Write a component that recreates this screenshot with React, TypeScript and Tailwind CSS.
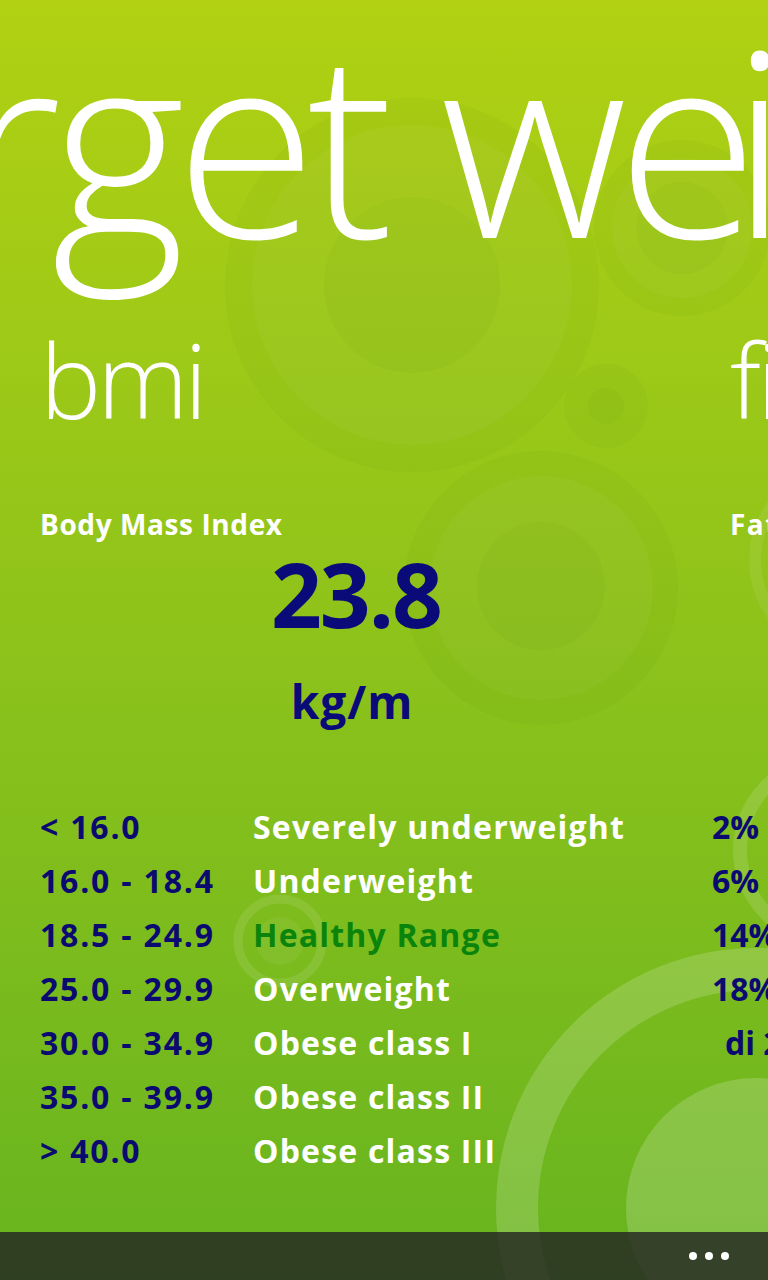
const rows: { range: string; label: string; extra: string; healthy?: boolean; indent?: boolean }[] = [
  { range: "< 16.0", label: "Severely underweight", extra: "2%" },
  { range: "16.0 - 18.4", label: "Underweight", extra: "6%" },
  { range: "18.5 - 24.9", label: "Healthy Range", extra: "14%", healthy: true },
  { range: "25.0 - 29.9", label: "Overweight", extra: "18%" },
  { range: "30.0 - 34.9", label: "Obese class I", extra: "di 2", indent: true },
  { range: "35.0 - 39.9", label: "Obese class II", extra: "" },
  { range: "> 40.0", label: "Obese class III", extra: "" },
];

function Backdrop() {
  return (
    <svg className="absolute inset-0" width="768" height="1280" viewBox="0 0 768 1280">
      {/* darker rings, upper half */}
      <g fill="#2f5a00" fillOpacity="0.04">
        <circle cx="412" cy="285" r="187" />
        <circle cx="412" cy="285" r="88" />
        <circle cx="682" cy="228" r="88" />
        <circle cx="682" cy="228" r="46" />
        <circle cx="606" cy="406" r="42" />
        <circle cx="606" cy="406" r="18" />
        <circle cx="541" cy="588" r="137" />
        <circle cx="541" cy="586" r="64" />
      </g>
      <g fill="#ffffff" fillOpacity="0.035">
        <circle cx="412" cy="285" r="160" />
        <circle cx="541" cy="588" r="112" />
        <circle cx="682" cy="228" r="70" />
      </g>
      {/* lighter rings, lower half */}
      <g fill="none" stroke="#ffffff">
        <circle cx="756" cy="1208" r="239" strokeWidth="42" strokeOpacity="0.17" />
        <circle cx="830" cy="850" r="90" strokeWidth="14" strokeOpacity="0.13" />
        <circle cx="850" cy="560" r="95" strokeWidth="12" strokeOpacity="0.07" />
        <circle cx="280" cy="941" r="42" strokeWidth="9" strokeOpacity="0.1" />
      </g>
      <circle cx="756" cy="1208" r="130" fill="#ffffff" fillOpacity="0.18" />
      <circle cx="280" cy="941" r="24" fill="#ffffff" fillOpacity="0.06" />
    </svg>
  );
}

export default function App() {
  return (
    <div className="relative w-[768px] h-[1280px] overflow-hidden bg-gradient-to-b from-[#b1d112] to-[#67b41f] font-['Open_Sans',sans-serif]">
      <Backdrop />
      <div className="relative flex flex-col h-full">
        <h1 className="mt-[9px] ml-[-242px] whitespace-nowrap text-[258px] leading-none font-light tracking-[-10px] text-white">
          target we<span className="ml-[-18px]">i</span>ght
        </h1>

        <div className="flex mt-[61px]">
          <section className="ml-[40px] w-[690px] shrink-0">
            <h2 className="text-[103px] leading-none font-light text-white tracking-[-4px]">bmi</h2>
            <p className="mt-[79px] text-[28px] leading-none font-bold text-white tracking-[0.6px]">
              Body Mass Index
            </p>
            <div className="w-[624px] text-center text-[#0a0a78]">
              <p className="mt-[11px] text-[89px] leading-none font-bold tracking-[-2px] pl-[8px]">23.8</p>
              <p className="mt-[40px] text-[46px] leading-none font-bold tracking-[1px]">kg/m</p>
            </div>

            <div className="mt-[76px] grid grid-cols-[213px_459px_120px] text-[32px] leading-[54px] font-bold whitespace-nowrap">
              {rows.map((r) => (
                <div key={r.range} className="contents">
                  <span className="text-[#0a0a70] tracking-[1.8px]">{r.range}</span>
                  <span className={`tracking-[1.2px] ${r.healthy ? "text-[#0b840c]" : "text-white"}`}>{r.label}</span>
                  <span className={`text-[#0a0a70] ${r.indent ? "pl-[13px]" : ""}`}>{r.extra}</span>
                </div>
              ))}
            </div>
          </section>

          <section className="shrink-0">
            <h2 className="text-[103px] leading-none font-light text-white tracking-[-4px]">fitness</h2>
            <p className="mt-[79px] text-[28px] leading-none font-bold text-white tracking-[1.5px]">
              Fat percentage
            </p>
          </section>
        </div>

        <div className="mt-auto h-[48px] bg-[#222222]/80 flex items-center justify-end gap-[8px] pr-[39px]">
          <span className="w-[8px] h-[8px] rounded-full bg-white" />
          <span className="w-[8px] h-[8px] rounded-full bg-white" />
          <span className="w-[8px] h-[8px] rounded-full bg-white" />
        </div>
      </div>
    </div>
  );
}
